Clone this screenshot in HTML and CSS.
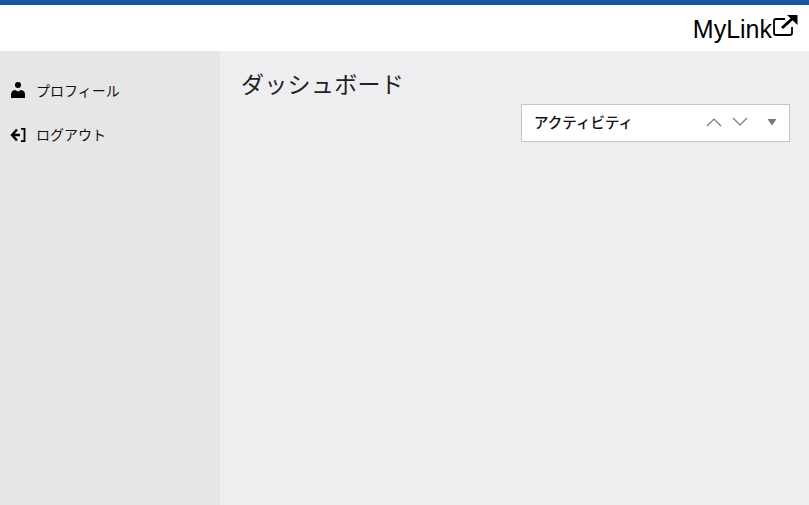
FILE: index.html
```html
<!DOCTYPE html>
<html lang="ja">
<head>
<meta charset="utf-8">
<title>MyLink</title>
<link rel="stylesheet" href="styles.css">
</head>
<body>
<div class="app">
  <header class="header">
    <div class="logo"><span class="logo-text">MyLink</span>
      <svg class="logo-icon" width="25" height="21" viewBox="0 0 25 21"><path d="M12 4H3Q1 4 1 6V18Q1 20 3 20H17Q19 20 19 18V12" fill="none" stroke="#000" stroke-width="1.800"/><path d="M9 13L19 4" fill="none" stroke="#000" stroke-width="3"/><path d="M14 0H24.500V10Z" fill="#000"/></svg>
    </div>
  </header>
  <div class="body">
    <nav class="sidebar">
      <a class="nav-item">
        <svg class="nav-icon" width="16" height="16" viewBox="0 0 16 16"><circle cx="8" cy="3" r="3"/><path d="M1 16V12.500Q1 8.500 5 8L8 9.500L11 8Q15 8.500 15 12.500V16Z"/></svg>
        <span>プロフィール</span>
      </a>
      <a class="nav-item">
        <svg class="nav-icon" width="16" height="16" viewBox="0 0 16 16"><path d="M7 3.500L2 9L7 14.500M2.500 9H10" fill="none" stroke="#000" stroke-width="2.400"/><path d="M11 2.800H14.500V15.200H11" fill="none" stroke="#000" stroke-width="1.800"/></svg>
        <span>ログアウト</span>
      </a>
    </nav>
    <main class="main">
      <h1 class="title">ダッシュボード</h1>
      <div class="panel">
        <span class="panel-title">アクティビティ</span>
        <svg class="chev" width="16" height="10" viewBox="0 0 16 10"><path d="M1 9L8 2L15 9" fill="none" stroke="#777" stroke-width="1.200"/></svg>
        <svg class="chev" width="16" height="10" viewBox="0 0 16 10"><path d="M1 1L8 8L15 1" fill="none" stroke="#777" stroke-width="1.200"/></svg>
        <svg class="caret" width="10" height="8" viewBox="0 0 10 8"><path d="M0.500 1H9.500L5 7.500Z" fill="#777"/></svg>
      </div>
    </main>
  </div>
</div>
</body>
</html>
```
FILE: styles.css
```css
* { box-sizing: border-box; }
html, body { margin: 0; height: 100%; }
body { font-family: "Noto Sans CJK JP", "Liberation Sans", sans-serif; color: #000; overflow: hidden; }
.app { height: 505px; display: flex; flex-direction: column; }
.header { height: 51px; background: #fff; border-top: 5px solid #17559e; display: flex; justify-content: flex-end; align-items: flex-start; padding-right: 11px; }
.logo { display: flex; align-items: flex-start; padding-top: 10px; }
.logo-text { font-family: "Liberation Sans", sans-serif; font-size: 25px; line-height: 28px; margin-right: 1px; }
.body { flex: 1; display: flex; min-height: 0; }
.sidebar { width: 220px; background: #e6e6e6; padding-top: 27px; display: flex; flex-direction: column; gap: 20px; }
.nav-item { display: flex; align-items: center; height: 24px; padding-left: 10px; gap: 10px; font-size: 14px; color: #111; }
.main { flex: 1; background: #eeeef1; padding: 16px 19px 0 21px; display: flex; flex-direction: column; }
.title { margin: 0; font-size: 23px; font-weight: 400; line-height: 32px; letter-spacing: 0.300px; color: #222; }
.panel { align-self: flex-end; width: 269px; height: 38px; margin-top: 5px; background: #fff; border: 1px solid #c6c6c6; display: flex; align-items: center; padding: 0 12px 2px; color: #111; }
.panel-title { font-size: 14.500px; font-weight: 500; flex: 1; line-height: 32px; }
.chev { margin-left: 10px; }
.caret { margin-left: 19px; }
```
